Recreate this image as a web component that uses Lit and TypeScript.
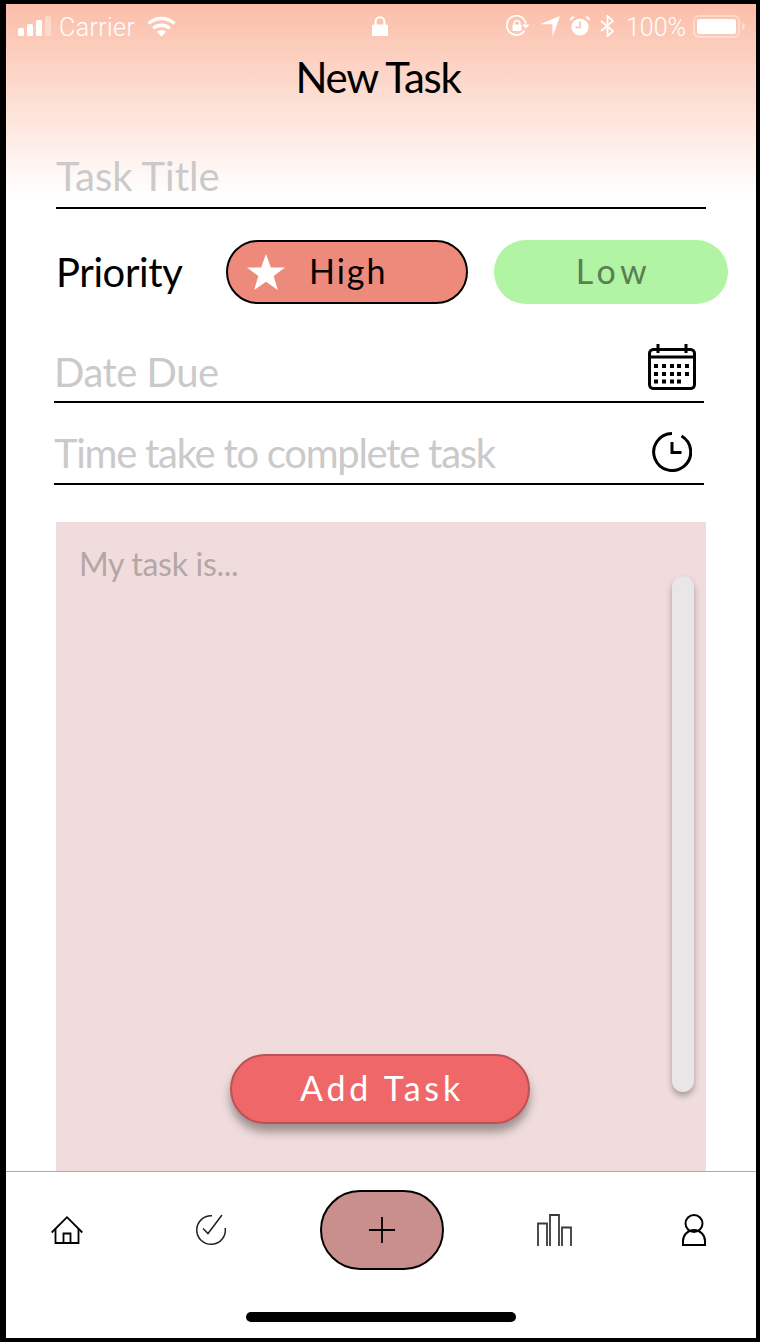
import { LitElement, html, css, svg } from "lit";
import { customElement } from "lit/decorators.js";

const hand = css`"Lato", "Open Sans", sans-serif`;

@customElement("app-root")
export class AppRoot extends LitElement {
  static styles = css`
    :host { display: block; width: 760px; height: 1342px; box-sizing: border-box; padding: 4px 4px 4px 6px; background: #000; }
    .screen { height: 1334px; background: #fff; display: flex; flex-direction: column; overflow: hidden; font-family: ${hand}; }
    .top { height: 205px; flex: none; box-sizing: border-box; background: linear-gradient(#fbbea8, #fff 192px); }
    .status { height: 44px; box-sizing: border-box; padding: 0 11px 0 12px; display: grid; grid-template-columns: 1fr auto 1fr; align-items: center; color: #fff; font-family: "Roboto", sans-serif; font-weight: 300; font-size: 25px; line-height: 24px; }
    .status svg { display: block; }
    .s-left, .s-right { display: flex; align-items: center; }
    .s-right { justify-content: flex-end; }
    .carrier { margin: 3px 12px 0 8px; letter-spacing: .4px; }
    .pct { margin: 3px 7px 0 11px; }
    .s-gap { margin-left: 10px; }
    .lock { margin-right: 4px; }
    .title { margin: 1px 0 0; text-align: center; padding-right: 6px; font-size: 42px; line-height: 56px; font-weight: 400; letter-spacing: -1.3px; color: #000; }
    .field { display: flex; align-items: flex-end; justify-content: space-between; box-sizing: border-box; width: 650px; border-bottom: 2px solid #000; flex: none; }
    .ph { color: #cbcaca; font-size: 40px; line-height: 54px; }
    .f-title { margin: 0 0 0 50px; }
    .overlap { margin-top: -64px; height: 64px; padding-bottom: 4px; }
    .priority { margin: 31px 0 0 50px; display: flex; align-items: center; height: 64px; flex: none; }
    .p-label { width: 170px; font-size: 40px; line-height: 64px; letter-spacing: -.4px; color: #000; }
    .pill { box-sizing: border-box; height: 64px; border-radius: 32px; display: flex; align-items: center; font-size: 34px; }
    .high { width: 242px; background: #ee8a7c; border: 2px solid #000; color: #000; padding-left: 19px; gap: 24px; letter-spacing: 2px; }
    .high span { padding-bottom: 4px; }
    .low { width: 234px; margin-left: 26px; padding: 0 0 4px 5px; background: #b0f4a4; color: #5a7f54; justify-content: center; letter-spacing: 4.5px; }
    .f-date { margin: 35px 0 0 48px; height: 64px; padding: 0 8px 0 0; align-items: center; }
    .f-date .ph { letter-spacing: -.5px; padding-top: 4px; }
    .f-date svg { margin-bottom: 6px; }
    .f-time { margin: 16px 0 0 48px; height: 66px; padding: 0 12px 0 0; align-items: center; }
    .f-time .ph { letter-spacing: -1.27px; padding-top: 4px; }
    .f-time svg { margin-top: 2px; }
    .card { position: relative; flex: 1; margin: 37px 0 0 50px; width: 650px; background: #f0dcdc; }
    .card-ph { padding: 15px 0 0 23px; color: #b5a6a6; font-size: 32px; line-height: 54px; letter-spacing: -.3px; }
    .scroll { position: absolute; left: 616px; top: 54px; width: 22px; height: 516px; border-radius: 11px; background: #e8e6e6; box-shadow: 0 4px 6px rgba(0,0,0,.3); }
    .add { position: absolute; left: 174px; top: 532px; box-sizing: border-box; width: 300px; height: 70px; padding: 0 0 4px 4px; border-radius: 35px; background: #f0676a; border: 2px solid #bd5153; box-shadow: 0 8px 10px rgba(0,0,0,.35); color: #fff; display: flex; align-items: center; justify-content: center; font-size: 34px; letter-spacing: 3.8px; }
    .nav { flex: none; height: 167px; box-sizing: border-box; border-top: 1px solid #b5a8a8; padding-top: 18px; display: flex; flex-direction: column; align-items: center; }
    .tabs { width: 100%; box-sizing: border-box; height: 80px; padding-right: 6px; display: grid; grid-template-columns: 122px 166px 176px 168px 112px; align-items: center; justify-items: center; }
    .plus { box-sizing: border-box; width: 124px; height: 80px; border-radius: 40px; background: #c98f8d; border: 2px solid #000; display: flex; align-items: center; justify-content: center; }
    .tabs svg { display: block; }
    .indicator { width: 270px; height: 10px; border-radius: 5px; background: #000; margin: 42px 0 0; }
  `;

  private calendarDots() {
    const xs = [8, 16, 24, 31, 39];
    const ys = [22, 30, 37.5];
    const out = [];
    for (let r = 0; r < 3; r++) {
      for (let c = 0; c < (r === 2 ? 4 : 5); c++) {
        out.push(svg`<rect x=${xs[c] - 2} y=${ys[r] - 2} width="4" height="4" fill="#000"></rect>`);
      }
    }
    return out;
  }

  render() {
    return html`
      <div class="screen">
        <div class="top">
          <div class="status">
            <div class="s-left">
              <svg width="33" height="20" viewBox="0 0 33 20">
                <rect x="0" y="12" width="6" height="8" rx="1.5" fill="#fff"></rect>
                <rect x="9" y="8" width="6" height="12" rx="1.5" fill="#fff"></rect>
                <rect x="18" y="4" width="6" height="16" rx="1.5" fill="#fff"></rect>
                <rect x="27" y="0" width="6" height="20" rx="1.5" fill="#fff" opacity=".35"></rect>
              </svg>
              <span class="carrier">Carrier</span>
              <svg width="29" height="21" viewBox="0 0 29 21" fill="none" stroke="#fff" stroke-width="3.4">
                <path d="M1.5 7.6C8.8 .8 20.2 .8 27.5 7.6"></path>
                <path d="M6.3 12.2C10.9 8.2 18.1 8.2 22.7 12.2"></path>
                <path d="M14.5 20.6L9.8 15.8C12.4 13.8 16.6 13.8 19.2 15.8Z" fill="#fff" stroke="none"></path>
              </svg>
            </div>
            <svg width="16" height="20" viewBox="0 0 16 20" class="lock">
              <path d="M3.6 9V5.6a4.4 4.4 0 0 1 8.8 0V9" fill="none" stroke="#fff" stroke-width="2"></path>
              <rect x="0" y="8.5" width="16" height="11.5" rx="1.5" fill="#fff"></rect>
            </svg>
            <div class="s-right">
              <svg width="24" height="22" viewBox="0 0 24 22" fill="none">
                <path d="M18.5 15.5A9.6 9.6 0 1 1 19.8 8.5" stroke="#fff" stroke-width="1.8"></path>
                <path d="M16 9.5h7.6l-3.8 4z" fill="#fff"></path>
                <rect x="6.5" y="9.5" width="9" height="6.5" rx="1" fill="#fff"></rect>
                <path d="M8.2 10V8.3a2.8 2.8 0 0 1 5.6 0V10" stroke="#fff" stroke-width="1.5"></path>
              </svg>
              <svg class="s-gap" width="20" height="21" viewBox="0 0 20 21"><path d="M20 0L12.5 21V8.2H0Z" fill="#fff"></path></svg>
              <svg class="s-gap" width="20" height="20" viewBox="0 0 20 20">
                <circle cx="10" cy="11" r="8.6" fill="#fff"></circle>
                <path d="M10 5.5V11.5H5.5" fill="none" stroke="#f5c4ae" stroke-width="1.6"></path>
                <path d="M0.5 5L5 .8 2.5 .3 0 2.5ZM19.5 5L15 .8 17.5 .3 20 2.5Z" fill="#fff"></path>
              </svg>
              <svg class="s-gap" width="15" height="22" viewBox="0 0 15 22" fill="none" stroke="#fff" stroke-width="1.8">
                <path d="M1 6L13 16 7.5 21V1L13 6 1 16"></path>
              </svg>
              <span class="pct">100%</span>
              <svg width="52" height="23" viewBox="0 0 52 23">
                <rect x="1" y="1" width="45" height="21" rx="5" fill="none" stroke="#fff" stroke-opacity=".4" stroke-width="2"></rect>
                <rect x="4" y="4" width="39" height="15" rx="2" fill="#fff"></rect>
                <path d="M49 8c2 .3 3 1.6 3 3.5s-1 3.2-3 3.5Z" fill="#fff" fill-opacity=".4"></path>
              </svg>
            </div>
          </div>
          <h1 class="title">New Task</h1>
        </div>

        <div class="field f-title overlap"><span class="ph">Task Title</span></div>

        <div class="priority">
          <div class="p-label">Priority</div>
          <div class="pill high">
            <svg width="38" height="36" viewBox="0 0 38 36"><path d="M19 0L23.9 13.4H38L26.7 22 30.8 36 19 27.7 7.2 36 11.3 22 0 13.4H14.1Z" fill="#fff"></path></svg>
            <span>High</span>
          </div>
          <div class="pill low">Low</div>
        </div>

        <div class="field f-date">
          <span class="ph">Date Due</span>
          <svg width="48" height="46" viewBox="0 0 48 46" fill="none">
            <rect x="1.5" y="5.5" width="45" height="39" rx="4" stroke="#000" stroke-width="3"></rect>
            <path d="M1.5 13H46.5" stroke="#000" stroke-width="3"></path>
            <path d="M10 0V9M38 0V9" stroke="#000" stroke-width="3"></path>
            ${this.calendarDots()}
          </svg>
        </div>

        <div class="field f-time">
          <span class="ph">Time take to complete task</span>
          <svg width="40" height="40" viewBox="0 0 40 40" fill="none" stroke="#000" stroke-width="3">
            <path d="M29.5 4A18.5 18.5 0 1 1 20 1.5"></path>
            <path d="M20 10V20.5H29.5" stroke-width="3"></path>
          </svg>
        </div>

        <div class="card">
          <div class="card-ph">My task is...</div>
          <div class="scroll"></div>
          <div class="add">Add Task</div>
        </div>

        <div class="nav">
          <div class="tabs">
            <svg width="32" height="30" viewBox="0 0 32 30" fill="none" stroke="#000" stroke-width="1.8">
              <path d="M.7 17.5L16 2.2 31.3 17.5"></path>
              <path d="M4.5 14V28H27.5V14"></path>
              <path d="M12.5 28V18.5H19.5V28"></path>
            </svg>
            <svg width="32" height="32" viewBox="0 0 32 32" fill="none" stroke="#222" stroke-width="1.5">
              <path d="M17 1.8A14.3 14.3 0 1 0 30.2 14"></path>
              <path d="M8 14.5L13 19.5 27 1"></path>
            </svg>
            <div class="plus">
              <svg width="26" height="26" viewBox="0 0 26 26"><path d="M0 13H26M13 0V26" stroke="#000" stroke-width="1.8"></path></svg>
            </div>
            <svg width="35" height="32" viewBox="0 0 35 32" fill="none" stroke="#3a3a3a" stroke-width="1.8">
              <path d="M1 32V9.5H10V32"></path>
              <path d="M13 32V1H22V32"></path>
              <path d="M25 32V13.5H34V32"></path>
            </svg>
            <svg width="24" height="32" viewBox="0 0 24 32" fill="none" stroke="#000" stroke-width="2">
              <circle cx="12" cy="9.5" r="8.5"></circle>
              <path d="M1 31V27A11 11 0 0 1 23 27V31Z"></path>
            </svg>
          </div>
          <div class="indicator"></div>
        </div>
      </div>
    `;
  }
}
